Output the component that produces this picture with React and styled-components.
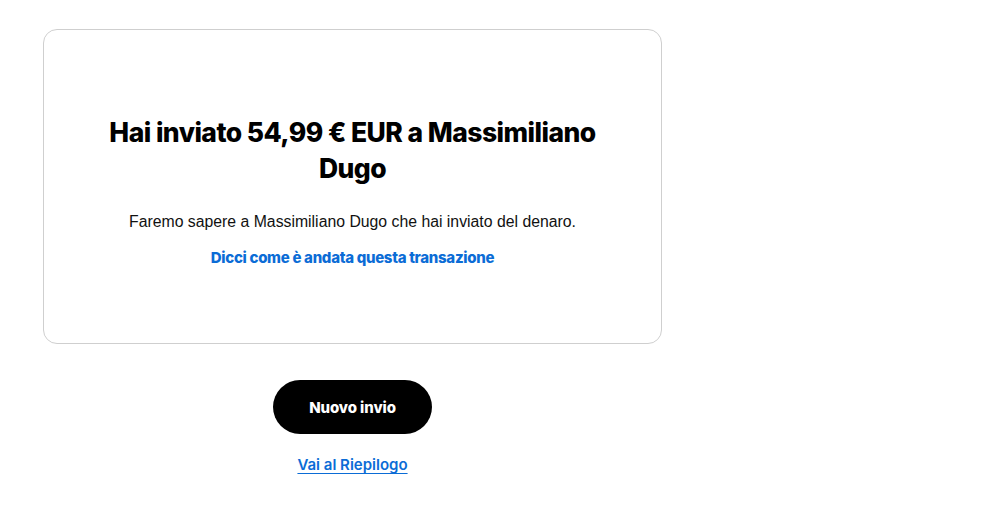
import React from "react";
import styled, { createGlobalStyle } from "styled-components";

const GlobalStyle = createGlobalStyle`
  body {
    margin: 0;
    background: #ffffff;
    font-family: "Liberation Sans", Arial, sans-serif;
    color: #000;
  }
`;

const Page = styled.div`
  width: 619px;
  padding: 29px 0 0 43px;
  display: flex;
  flex-direction: column;
  align-items: center;
`;

const Card = styled.section`
  box-sizing: border-box;
  width: 100%;
  height: 315px;
  border: 1px solid #cfcfcf;
  border-radius: 14px;
  padding: 84px 30px 0;
  display: flex;
  flex-direction: column;
  align-items: center;
  text-align: center;
`;

const Title = styled.h1`
  margin: 0;
  max-width: 530px;
  font-family: Inter, "Liberation Sans", sans-serif;
  font-weight: 800;
  font-size: 26.5px;
  line-height: 36px;
  letter-spacing: -0.55px;
  color: #000;
`;

const Message = styled.p`
  margin: 25px 0 0;
  font-size: 15.8px;
  line-height: 22px;
  color: #111;
`;

const FeedbackLink = styled.a`
  margin-top: 14px;
  font-family: Inter, "Liberation Sans", sans-serif;
  font-weight: 800;
  font-size: 15px;
  line-height: 22px;
  color: #0b6cd6;
  text-decoration: none;
  letter-spacing: -0.3px;
`;

const Button = styled.button`
  margin-top: 36px;
  width: 159px;
  height: 54px;
  border: none;
  border-radius: 27px;
  background: #000;
  color: #fff;
  font-family: Inter, "Liberation Sans", sans-serif;
  font-weight: 800;
  font-size: 15px;
  letter-spacing: -0.1px;
  cursor: pointer;
`;

const SummaryLink = styled.a`
  margin-top: 20px;
  font-family: Inter, "Liberation Sans", sans-serif;
  font-weight: 600;
  font-size: 15px;
  line-height: 22px;
  color: #0b6cd6;
  text-decoration: underline;
  text-underline-offset: 3px;
`;

function App() {
  return (
    <>
      <GlobalStyle />
      <Page>
        <Card>
          <Title>Hai inviato 54,99 € EUR a Massimiliano Dugo</Title>
          <Message>Faremo sapere a Massimiliano Dugo che hai inviato del denaro.</Message>
          <FeedbackLink href="#">Dicci come è andata questa transazione</FeedbackLink>
        </Card>
        <Button>Nuovo invio</Button>
        <SummaryLink href="#">Vai al Riepilogo</SummaryLink>
      </Page>
    </>
  );
}

export default App;
